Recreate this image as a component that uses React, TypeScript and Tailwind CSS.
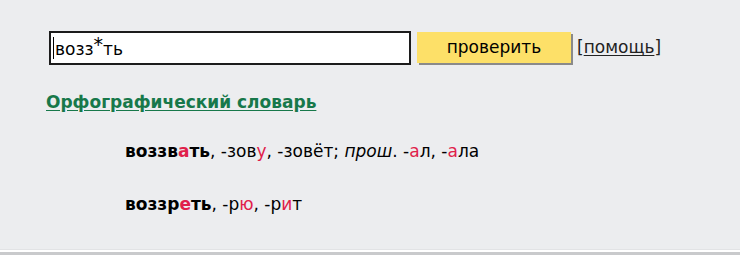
export default function App() {
  return (
    <div className="w-[740px] h-[255px] bg-[#ecedef] flex flex-col font-['DejaVu_Sans',Verdana,sans-serif] text-black">
      <div className="flex-1 pl-[46px] pt-[31px]">
        <div className="flex items-center">
          <div className="ml-[3px] w-[362px] h-[34px] border-2 border-[#1c1c1c] bg-white flex items-center pl-[2px]">
            <span className="border-l border-black h-[22px] mr-[1px]" />
            <span className="text-[17px] leading-none">
              возз<span className="text-[19px] relative top-[-4px]">*</span>ть
            </span>
          </div>
          <button className="ml-[6px] w-[154px] h-[31px] bg-[#fde068] text-[17px] leading-none shadow-[2px_2px_0_#8a8a8a] mb-[1px]">
            проверить
          </button>
          <span className="ml-[6px] text-[17px] text-[#222]">
            [<span className="underline underline-offset-2">помощь</span>]
          </span>
        </div>
        <div className="mt-[25px] text-[17px] font-bold text-[#17784a] underline underline-offset-2">
          Орфографический словарь
        </div>
        <div className="pl-[79px] mt-[25px] text-[17px] leading-[20px]">
          <div>
            <b>воззв<span className="text-[#e0204a]">а</span>ть</b>, -зов<span className="text-[#e0204a]">у</span>, -зовёт; <i>прош</i>. -<span className="text-[#e0204a]">а</span>л, -<span className="text-[#e0204a]">а</span>ла
          </div>
          <div className="mt-[33px]">
            <b>воззр<span className="text-[#e0204a]">е</span>ть</b>, -р<span className="text-[#e0204a]">ю</span>, -р<span className="text-[#e0204a]">и</span>т
          </div>
        </div>
      </div>
      <div className="h-[1px] bg-[#e2e3e5]" />
      <div className="h-[2px] bg-white" />
      <div className="h-[3px] bg-[#c9cacc]" />
    </div>
  );
}
